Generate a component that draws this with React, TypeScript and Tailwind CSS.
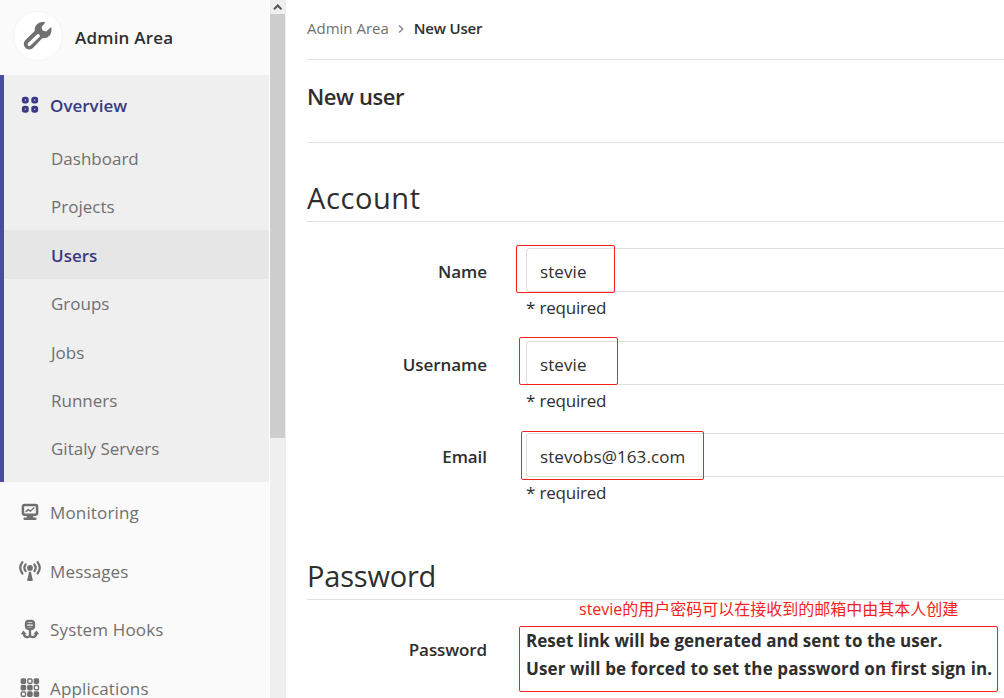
import type { ReactNode } from 'react';

function WrenchIcon() {
  return (
    <svg className="size-8" viewBox="0 0 32 32" fill="#707070">
      <path d="M23.300 2.400C17.500.7 12.300 4.500 12.700 11L3.700 19.700C1.200 22.200 1.400 25.700 3.500 27.800c2.200 2.200 5.700 2.100 8-.3l8.700-9.300c6.300.9 10.800-4.700 8.900-11.200l-4.900 4.500-3.700-.9-.9-3.700z" />
      <path d="M16.200 15.800 7.300 24.300" stroke="#fff" strokeWidth="3.400" strokeLinecap="round" />
    </svg>
  );
}

function OverviewIcon() {
  return (
    <svg className="size-[18px]" viewBox="0 0 18 18" fill="none" stroke="#3a3a85" strokeWidth="2.9">
      <rect x="2.300" y="2.100" width="4" height="4" rx="1.300" />
      <rect x="11.700" y="2.100" width="4" height="4" rx="1.300" />
      <rect x="2.300" y="11.300" width="4" height="4" rx="1.300" />
      <rect x="11.700" y="11.300" width="4" height="4" rx="1.300" />
    </svg>
  );
}

function MonitorIcon() {
  return (
    <svg className="size-[18px]" viewBox="0 0 18 18" fill="none" stroke="#707070">
      <rect x="1.900" y="1.900" width="14.200" height="9.800" rx="2" strokeWidth="2.500" />
      <path d="M4.500 9 7.300 6.500 9.400 8.200 13.300 4.600" strokeWidth="1.400" />
      <path d="M9 12v3" strokeWidth="6.500" />
      <path d="M3.700 15.700h10.600" strokeWidth="2.600" strokeLinecap="round" />
    </svg>
  );
}

function BroadcastIcon() {
  return (
    <svg className="h-[22px] w-[22px]" viewBox="0 0 22 22" fill="none" stroke="#707070" strokeWidth="2.200" strokeLinecap="round">
      <circle cx="11" cy="7.900" r="2.900" fill="#707070" stroke="none" />
      <path d="M10.100 11.800h1.800l2 8.800q-2.900 1-5.800 0z" fill="#707070" stroke="none" />
      <path d="M6.600 4.500c-1.500 2-1.500 4.700 0 6.700M15.400 4.500c1.500 2 1.500 4.700 0 6.700M3.400 2.200c-2.600 3.400-2.600 7.900 0 11.300M18.600 2.200c2.600 3.400 2.600 7.900 0 11.300" />
    </svg>
  );
}

function HookIcon() {
  return (
    <svg className="h-5 w-[18px]" viewBox="0 0 18 20" fill="none" stroke="#707070" strokeWidth="2.300">
      <rect x="5" y="1.900" width="8" height="8" rx="2.800" />
      <path d="M5 4.700h8M5 7.600h8" strokeWidth="1.700" />
      <path d="M9 10v6M2.700 13.500c0 5.700 6.300 6 6.300 2 0 4 6.300 3.700 6.300-2" />
      <path d="M-.2 15.200 2.400 11.400 5.700 15.200zM12.300 15.200l3.300-3.800 2.600 3.800z" fill="#707070" stroke="none" />
    </svg>
  );
}

const gridCells = [
  [0, 0, true], [1, 0, false], [2, 0, true],
  [0, 1, true], [1, 1, true], [2, 1, false],
  [0, 2, false], [1, 2, true], [2, 2, true],
] as const;

function ApplicationsIcon() {
  return (
    <svg className="h-[19px] w-5" viewBox="0 0 20 19" stroke="#707070" strokeWidth="1.400">
      {gridCells.map(([col, row, solid]) => (
        <rect
          key={`${col}-${row}`}
          x={1.300 + col * 6.500}
          y={1 + row * 6.500}
          width="4.200"
          height="4.200"
          rx="0.900"
          fill={solid ? '#707070' : 'none'}
        />
      ))}
    </svg>
  );
}

const subItems = [
  { label: 'Dashboard', height: 'h-12' },
  { label: 'Projects', height: 'h-12' },
  { label: 'Users', height: 'h-[49px]', active: true },
  { label: 'Groups', height: 'h-12' },
  { label: 'Jobs', height: 'h-[49px]' },
  { label: 'Runners', height: 'h-12' },
  { label: 'Gitaly Servers', height: 'h-12' },
];

function NavItem({ icon, label, className = '' }: { icon: ReactNode; label: string; className?: string }) {
  return (
    <a className={`flex shrink-0 items-center pl-[18.500px] tracking-[0.15px] ${className}`}>
      <span className="flex w-[22px] justify-center">{icon}</span>
      <span className="ml-[9.500px] pt-0.5">{label}</span>
    </a>
  );
}

function Sidebar() {
  return (
    <nav className="flex w-[269px] shrink-0 flex-col bg-[#fafafa] text-[17px] text-[#707070]">
      <header className="flex h-[75px] shrink-0 items-center pl-[13px]">
        <span className="mb-[3px] flex size-[50px] items-center justify-center rounded-full border border-[#f4f4f4] bg-white">
          <WrenchIcon />
        </span>
        <span className="ml-3 font-semibold tracking-[0.2px] text-[#2e2e2e]">Admin Area</span>
      </header>
      <section className="h-[407px] shrink-0 border-l-4 border-[#4b4ba3] bg-[#efefef]">
        <a className="flex h-[59px] items-center pl-[17px] font-semibold text-[#393982]">
          <OverviewIcon />
          <span className="ml-[11px] pt-0.5">Overview</span>
        </a>
        <div className="flex flex-col">
          {subItems.map((item) => (
            <a
              key={item.label}
              className={`flex items-center pl-[47px] ${item.height} ${
                item.active ? 'bg-[#e6e6e6] font-semibold text-[#393982]' : ''
              }`}
            >
              <span className="pt-0.5">{item.label}</span>
            </a>
          ))}
        </div>
      </section>
      <NavItem icon={<MonitorIcon />} label="Monitoring" className="h-[59px]" />
      <NavItem icon={<BroadcastIcon />} label="Messages" className="h-[59px]" />
      <NavItem icon={<HookIcon />} label="System Hooks" className="h-[58px]" />
      <NavItem icon={<ApplicationsIcon />} label="Applications" className="h-[59px]" />
    </nav>
  );
}

function Scrollbar() {
  return (
    <div className="ml-px w-4 shrink-0 bg-[#efefef]">
      <div className="flex h-[14px] items-center justify-center">
        <svg className="h-2 w-3" viewBox="0 0 12 8" fill="none" stroke="#555" strokeWidth="2">
          <path d="M2 6.200 5.700 2.500 9.400 6.200" />
        </svg>
      </div>
      <div className="h-[424px] w-[15px] bg-[#cdcdcd]" />
    </div>
  );
}

function Field({ label, value, className, mark }: { label: string; value: string; className: string; mark: string }) {
  return (
    <div className={`flex ${className}`}>
      <label className="h-11 w-[180px] shrink-0 pt-px text-right text-[17px] leading-[46px] font-semibold tracking-[-0.05px]">
        {label}
      </label>
      <div className="relative ml-[39px] grow">
        <div className="h-11 rounded-l border border-r-0 border-[#dfdfdf] pl-[13px] text-[17px] leading-[45px] tracking-[0.1px]">
          {value}
        </div>
        <p className="text-[17px] leading-[31px] tracking-[-0.2px]">* required</p>
        <span className={`absolute rounded-xs border border-[#f5221b] ${mark}`} />
      </div>
    </div>
  );
}

export default function App() {
  return (
    <div className="flex h-[698px] w-[1004px] overflow-hidden bg-white font-['Open_Sans','Noto_Sans_CJK_SC',sans-serif] text-[#2e2e2e]">
      <Sidebar />
      <Scrollbar />
      <main className="flex min-w-0 grow flex-col pl-[21px]">
        <div className="flex h-[60px] shrink-0 items-center border-b border-[#e1e1e1] pb-0.5 text-[15px]">
          <span className="text-[#707070]">Admin Area</span>
          <svg className="mr-[9px] ml-2 h-2.5 w-2" viewBox="0 0 8 10" fill="none" stroke="#8a8a8a" strokeWidth="1.500">
            <path d="M2 1.500 5.700 5 2 8.500" />
          </svg>
          <span className="font-semibold tracking-[-0.2px]">New User</span>
        </div>
        <h1 className="h-[83px] shrink-0 border-b border-[#e1e1e1] text-[22px] leading-[73px] font-semibold tracking-[-0.4px]">
          New user
        </h1>
        <h2 className="h-[79px] shrink-0 border-b border-[#e1e1e1] pt-9 text-[29px] leading-[38px] tracking-[0.6px]">
          Account
        </h2>
        <Field className="mt-[26px] h-[93px]" label="Name" value="stevie" mark="-left-[10px] -top-[3px] h-12 w-[99px]" />
        <Field className="h-[92px]" label="Username" value="stevie" mark="-left-[7px] -top-1 h-12 w-[99px]" />
        <Field className="h-[93px]" label="Email" value="stevobs@163.com" mark="-left-[5px] -top-0.5 h-[49px] w-[183px]" />
        <h2 className="h-[74px] shrink-0 border-b border-[#e1e1e1] pt-[31px] text-[29px] leading-[38px] tracking-[-0.2px]">
          Password
        </h2>
        <div className="flex">
          <span className="w-[180px] shrink-0 pt-[38px] text-right text-[17px] leading-6 font-semibold tracking-[-0.1px]">
            Password
          </span>
          <div className="ml-8">
            <p className="h-[26px] pl-[60px] text-[16px] leading-[19px] whitespace-nowrap text-[#f5221b]">
              stevie的用户密码可以在接收到的邮箱中由其本人创建
            </p>
            <div className="h-[66px] w-[479px] rounded-xs border border-[#f5221b] pl-1.5 text-[17px] leading-7 font-bold whitespace-nowrap">
              <p className="tracking-[0.03px]">Reset link will be generated and sent to the user.</p>
              <p className="tracking-[0.12px]">User will be forced to set the password on first sign in.</p>
            </div>
          </div>
        </div>
      </main>
    </div>
  );
}
